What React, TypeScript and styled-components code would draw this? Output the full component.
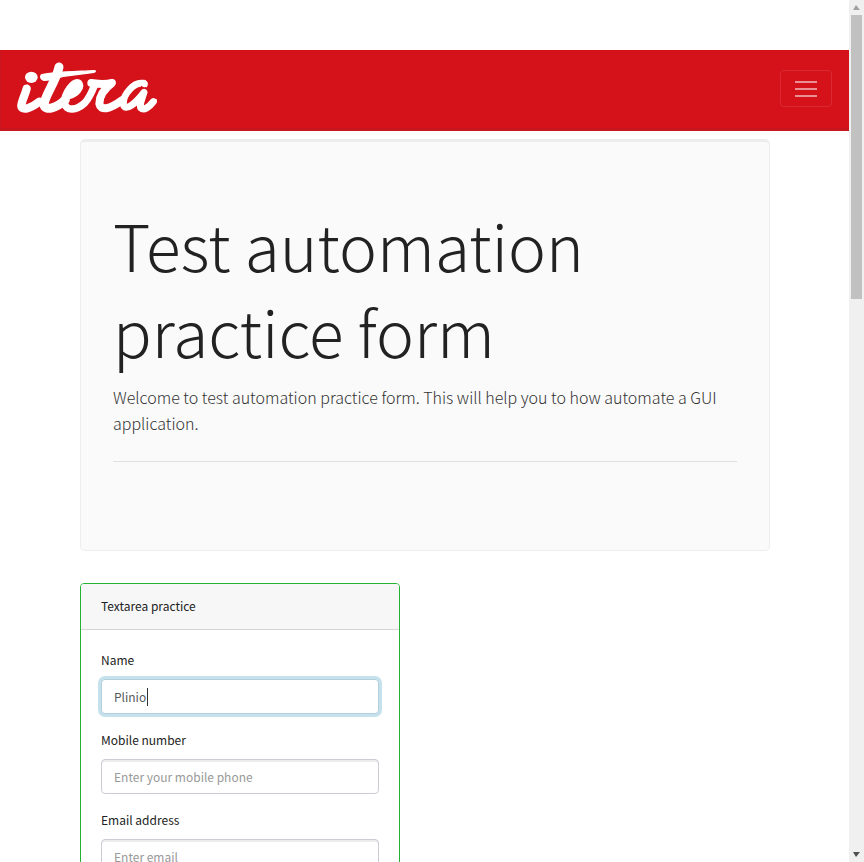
import React from "react";
import styled, { createGlobalStyle } from "styled-components";

const Global = createGlobalStyle`
  *, *::before, *::after { box-sizing: border-box; }
  body {
    margin: 0;
    background: #fff;
    color: #222;
    font-family: "Noto Sans CJK JP", "Noto Sans", sans-serif;
    font-size: 12px;
    line-height: 20px;
  }
`;

const Window = styled.div`
  display: flex;
  height: 100vh;
  overflow: hidden;
`;

const Page = styled.div`
  flex: 1;
  min-width: 0;
  overflow: hidden;
  padding-top: 50px;
`;

const Navbar = styled.header`
  display: flex;
  align-items: center;
  justify-content: space-between;
  height: 81px;
  padding: 0 17px 2px 15px;
  background: #d5111a;
  border: 1px solid #c81620;
  border-width: 0 0 3px 1px;
`;

const Brand = styled.a`
  display: block;
  line-height: 0;
`;

const Toggler = styled.button`
  display: flex;
  align-items: center;
  justify-content: center;
  width: 52px;
  height: 37px;
  padding: 0;
  background: transparent;
  border: 1px solid #d92932;
  border-radius: 4px;
`;

const Container = styled.main`
  padding: 8px 79px 0 80px;
`;

const Hero = styled.section`
  min-height: 412px;
  padding: 59px 32px;
  margin-bottom: 32px;
  background: #fafafa;
  border: 1px solid #ededed;
  border-top-width: 3px;
  border-radius: 5px;
`;

const Title = styled.h1`
  margin: 0 0 11px;
  font-size: 64px;
  font-weight: 300;
  line-height: 86px;
`;

const Lead = styled.p`
  margin: 0 0 25px;
  color: #333;
  font-size: 16px;
  font-weight: 300;
  line-height: 26px;
`;

const Rule = styled.hr`
  margin: 0;
  border: 0;
  border-top: 1px solid #e0e0e0;
`;

const Card = styled.section`
  max-width: 320px;
  border: 1px solid #22b431;
  border-radius: 4px;
  overflow: hidden;
`;

const CardHeader = styled.h2`
  margin: 0;
  padding: 12px 20px 13px;
  background: #f7f7f7;
  border-bottom: 1px solid #d6d6d6;
  font-size: 12px;
  font-weight: 400;
  line-height: 20px;
`;

const CardBody = styled.form`
  padding: 20px;
`;

const Field = styled.div`
  display: flex;
  flex-direction: column;
  gap: 9px;
  margin-bottom: 16px;
`;

const InputWrap = styled.div`
  position: relative;
  display: flex;
`;

const TextInput = styled.input`
  width: 100%;
  height: 35px;
  padding: 0 12px;
  background: #fff;
  border: 1px solid #cbccd6;
  border-radius: 4px;
  box-shadow: inset 0 2px 0 #ececec;
  color: #55595c;
  caret-color: transparent;
  font: inherit;
  outline: none;
  &::placeholder { color: #999; opacity: 1; }
  &:focus {
    border-color: #b3cfdd;
    box-shadow: 0 0 0 3px #c5e1ec;
  }
`;

const Caret = styled.span`
  position: absolute;
  top: 9px;
  left: 46px;
  width: 1px;
  height: 18px;
  background: #333;
  pointer-events: none;
`;

const ScrollTrack = styled.div`
  display: flex;
  flex-direction: column;
  align-items: center;
  width: 15px;
  padding: 5px 2px;
  background: #f0f0f0;
`;

const ScrollThumb = styled.div`
  width: 11px;
  height: 33vh;
  margin: 5px 0 auto;
  background: #c1c1c1;
`;

const Logo = () => (
  <svg width="142" height="54" viewBox="48 52 426 162" fill="none" stroke="#fff" strokeLinecap="round" strokeLinejoin="round" role="img" aria-label="itera">
    <ellipse cx="94" cy="101" rx="19" ry="17" fill="#fff" stroke="none" />
    <path strokeWidth="25" d="M80 135 C76 152 64 174 64 187 C66 202 94 194 118 174" />
    <path strokeWidth="27" d="M177 70 C168 114 132 158 132 184 C136 202 170 194 196 168" />
    <path fill="#fff" strokeWidth="4" d="M124 94 C146 86 200 85 283 81 C290 82 284 86 276 87 L190 98 C168 102 158 110 132 110 C122 108 120 98 124 94Z" />
    <path strokeWidth="22" d="M206 156 C228 152 246 130 236 118 C222 112 192 148 194 178 C198 204 230 200 254 178 C268 164 276 144 284 124" />
    <path strokeWidth="24" d="M274 118 C290 120 310 124 336 118 C312 136 298 160 298 180 C302 202 328 198 366 170" />
    <path strokeWidth="21" d="M432 120 C402 112 368 154 370 182 C376 206 410 176 432 146 C426 166 418 180 422 192 C432 202 448 190 460 174" />
    <path fill="#fff" strokeWidth="2" d="M424 110 C440 106 446 118 440 130 L424 124Z M452 176 L469 167 C472 172 464 184 456 190Z" />
    <path stroke="#d5111a" strokeWidth="3" d="M424 128 L430 132" />
  </svg>
);

const fields = [
  { id: "name", label: "Name", type: "text", placeholder: "Enter your name", value: "Plinio", focus: true },
  { id: "phone", label: "Mobile number", type: "tel", placeholder: "Enter your mobile phone" },
  { id: "email", label: "Email address", type: "email", placeholder: "Enter email" },
];

export default function App() {
  return (
    <>
      <Global />
      <Window>
        <Page>
          <Navbar>
            <Brand href="#"><Logo /></Brand>
            <Toggler type="button" aria-label="Toggle navigation">
              <svg width="22" height="17" viewBox="0 0 22 17" stroke="#ea8f93" strokeWidth="2">
                <path d="M0 2h22M0 9h22M0 16h22" />
              </svg>
            </Toggler>
          </Navbar>
          <Container>
            <Hero>
              <Title>Test automation practice form</Title>
              <Lead>Welcome to test automation practice form. This will help you to how automate a GUI application.</Lead>
              <Rule />
            </Hero>
            <Card>
              <CardHeader>Textarea practice</CardHeader>
              <CardBody>
                {fields.map((f) => (
                  <Field key={f.id}>
                    <label htmlFor={f.id}>{f.label}</label>
                    <InputWrap>
                      <TextInput id={f.id} type={f.type} placeholder={f.placeholder} defaultValue={f.value} autoFocus={f.focus} />
                      {f.focus && <Caret />}
                    </InputWrap>
                  </Field>
                ))}
              </CardBody>
            </Card>
          </Container>
        </Page>
        <ScrollTrack aria-hidden="true">
          <svg width="7" height="5" viewBox="0 0 7 5"><path d="M0 5L3 0L7 5z" fill="#a0a0a0" /></svg>
          <ScrollThumb />
          <svg width="7" height="5" viewBox="0 0 7 5"><path d="M0 0L3 5L7 0z" fill="#505050" /></svg>
        </ScrollTrack>
      </Window>
    </>
  );
}
